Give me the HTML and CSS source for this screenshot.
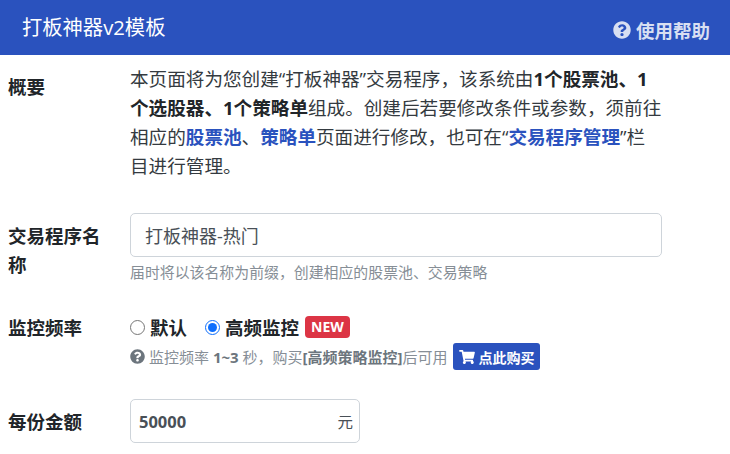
FILE: index.html
```html
<!DOCTYPE html>
<html lang="zh-CN">
<head>
    <meta charset="UTF-8">
    <meta name="viewport" content="width=device-width, initial-scale=1.0">
    <title>打板神器v2模板</title>
    <link rel="stylesheet" href="styles.css">
</head>
<body>
    <header class="top-bar">
        <h1 class="top-title">打板神器v2模板</h1>
        <a class="help-link" href="#">
            <svg class="help-icon" viewBox="0 0 512 512"><path d="M504 256c0 136.997-111.043 248-248 248S8 392.997 8 256C8 119.083 119.043 8 256 8s248 111.083 248 248zM262.655 90c-54.497 0-89.255 22.957-116.549 63.758-3.536 5.286-2.353 12.415 2.715 16.258l34.699 26.31c5.205 3.947 12.621 3.008 16.665-2.122 17.864-22.658 30.113-35.797 57.303-35.797 20.429 0 45.698 13.148 45.698 32.958 0 14.976-12.363 22.667-32.534 33.976C247.128 238.528 216 254.941 216 296v4c0 6.627 5.373 12 12 12h56c6.627 0 12-5.373 12-12v-1.333c0-28.462 83.186-29.647 83.186-106.667 0-58.002-60.165-102-116.531-102zM256 338c-25.365 0-46 20.635-46 46 0 25.364 20.635 46 46 46s46-20.636 46-46c0-25.365-20.635-46-46-46z"/></svg>
            使用帮助
        </a>
    </header>

    <form class="tpl-form">
        <div class="row row-intro">
            <div class="row-label label-intro">概要</div>
            <p class="intro">本页面将为您创建“打板神器”交易程序，该系统由<b>1个股票池、1个选股器、1个策略单</b>组成。创建后若要修改条件或参数，须前往相应的<a href="#">股票池</a>、<a href="#">策略单</a>页面进行修改，也可在“<a href="#">交易程序管理</a>”栏目进行管理。</p>
        </div>

        <div class="row row-name">
            <label class="row-label" for="tplName">交易程序名称</label>
            <div>
                <input class="name-input" type="text" id="tplName" value="打板神器-热门">
                <div class="hint">届时将以该名称为前缀，创建相应的股票池、交易策略</div>
            </div>
        </div>

        <div class="row row-freq">
            <div class="row-label">监控频率</div>
            <div>
                <div class="radios">
                    <label class="radio"><input type="radio" name="freq">默认</label>
                    <label class="radio"><input type="radio" name="freq" checked>高频监控</label>
                    <span class="badge-new">NEW</span>
                </div>
                <div class="freq-hint">
                    <svg class="hint-icon" viewBox="0 0 512 512"><path d="M504 256c0 136.997-111.043 248-248 248S8 392.997 8 256C8 119.083 119.043 8 256 8s248 111.083 248 248zM262.655 90c-54.497 0-89.255 22.957-116.549 63.758-3.536 5.286-2.353 12.415 2.715 16.258l34.699 26.31c5.205 3.947 12.621 3.008 16.665-2.122 17.864-22.658 30.113-35.797 57.303-35.797 20.429 0 45.698 13.148 45.698 32.958 0 14.976-12.363 22.667-32.534 33.976C247.128 238.528 216 254.941 216 296v4c0 6.627 5.373 12 12 12h56c6.627 0 12-5.373 12-12v-1.333c0-28.462 83.186-29.647 83.186-106.667 0-58.002-60.165-102-116.531-102zM256 338c-25.365 0-46 20.635-46 46 0 25.364 20.635 46 46 46s46-20.636 46-46c0-25.365-20.635-46-46-46z"/></svg>
                    <span>监控频率 <b>1~3</b> 秒，购买<b>[高频策略监控]</b>后可用</span>
                    <button type="button" class="buy-btn">
                        <svg class="cart-icon" viewBox="0 0 576 512"><path d="M528.12 301.319l47.273-208C578.806 78.301 567.391 64 551.99 64H159.208l-9.166-44.81C147.758 8.021 137.93 0 126.529 0H24C10.745 0 0 10.745 0 24v16c0 13.255 10.745 24 24 24h69.883l70.248 343.435C147.325 417.1 136 435.222 136 456c0 30.928 25.072 56 56 56s56-25.072 56-56c0-15.674-6.447-29.835-16.824-40h209.647C430.447 426.165 424 440.326 424 456c0 30.928 25.072 56 56 56s56-25.072 56-56c0-22.172-12.888-41.332-31.579-50.405l5.517-24.276c3.413-15.018-8.002-29.319-23.403-29.319H218.117l-6.545-32h293.145c11.206 0 20.92-7.754 23.403-18.681z"/></svg>
                        点此购买
                    </button>
                </div>
            </div>
        </div>

        <div class="row row-amount">
            <label class="row-label" for="amount">每份金额</label>
            <div class="amount-box">
                <input class="amount-input" type="text" id="amount" value="50000">
                <span class="unit">元</span>
            </div>
        </div>
    </form>
</body>
</html>
```

FILE: styles.css
```css
html, body { height: 454px; overflow: hidden; }
body { margin: 0; background: #fff; color: #212529; font-family: "Open Sans", "Noto Sans CJK SC", sans-serif; }
.top-bar { display: flex; justify-content: space-between; align-items: center; height: 55px; padding: 0 20px 0 22px; box-sizing: border-box; background: #2a52be; }
.top-title { margin: 0 0 4px; font-size: 20.3px; font-weight: 400; color: #fff; }
.help-link { display: flex; align-items: center; gap: 5px; margin-top: 5px; font-size: 18.5px; font-weight: 700; color: #d8dff2; text-decoration: none; }
.help-icon { width: 18px; height: 18px; fill: #d8dff2; }
.tpl-form { padding: 0 0 0 8px; }
.row { display: grid; grid-template-columns: 122px 532px; }
.row-label { padding-right: 18px; font-size: 18.5px; font-weight: 700; line-height: 29px; color: #212529; }
.row-intro { padding-top: 9px; }
.label-intro { padding-top: 8px; }
.intro { margin: 0; font-size: 18.6px; line-height: 29px; color: #343a40; }
.intro b { color: #212529; }
.intro a { font-weight: 700; color: #2a52be; text-decoration: none; }
.row-name { margin-top: 33px; }
.row-name .row-label { padding-top: 8px; }
.name-input { display: block; width: 100%; height: 44px; box-sizing: border-box; padding: 0 14px; border: 1px solid #ced4da; border-radius: 5px; font-family: inherit; font-size: 18px; color: #495057; }
.hint { margin-top: 5px; font-size: 14.9px; line-height: 20px; color: #868e96; }
.row-freq { margin-top: 30px; }
.row-freq .row-label { padding-top: 1px; }
.radios { display: flex; align-items: center; height: 30px; }
.radio { display: flex; align-items: center; margin-right: 18px; font-size: 18.5px; font-weight: 700; }
.radio input { width: 15px; height: 15px; margin: 0 5px 0 0; accent-color: #0d6efd; }
.radio:last-of-type { margin-right: 6px; }
.badge-new { padding: 0 6px; border-radius: 4px; background: #dc3545; color: #fff; font-size: 14px; font-weight: 700; line-height: 22px; }
.freq-hint { display: flex; align-items: center; margin-top: 1px; font-size: 15px; color: #868e96; }
.freq-hint b { color: #6c757d; }
.hint-icon { width: 15px; height: 15px; margin-right: 4px; fill: #6c757d; }
.buy-btn { display: flex; align-items: center; gap: 4px; height: 27px; margin-left: 5px; padding: 0 5px 0 6px; border: none; border-radius: 3px; background: #2a52be; color: #fff; font-family: inherit; font-size: 14px; font-weight: 700; }
.cart-icon { width: 16px; height: 14px; fill: #fff; }
.row-amount { margin-top: 29px; align-items: center; }
.amount-box { display: flex; align-items: center; width: 230px; height: 44px; box-sizing: border-box; border: 1px solid #ced4da; border-radius: 5px; padding: 0 6px 0 8px; }
.amount-input { flex: 1; min-width: 0; border: none; outline: none; padding: 0; font-family: inherit; font-size: 16.5px; font-weight: 700; color: #495057; }
.unit { font-size: 15.5px; color: #495057; }
```
